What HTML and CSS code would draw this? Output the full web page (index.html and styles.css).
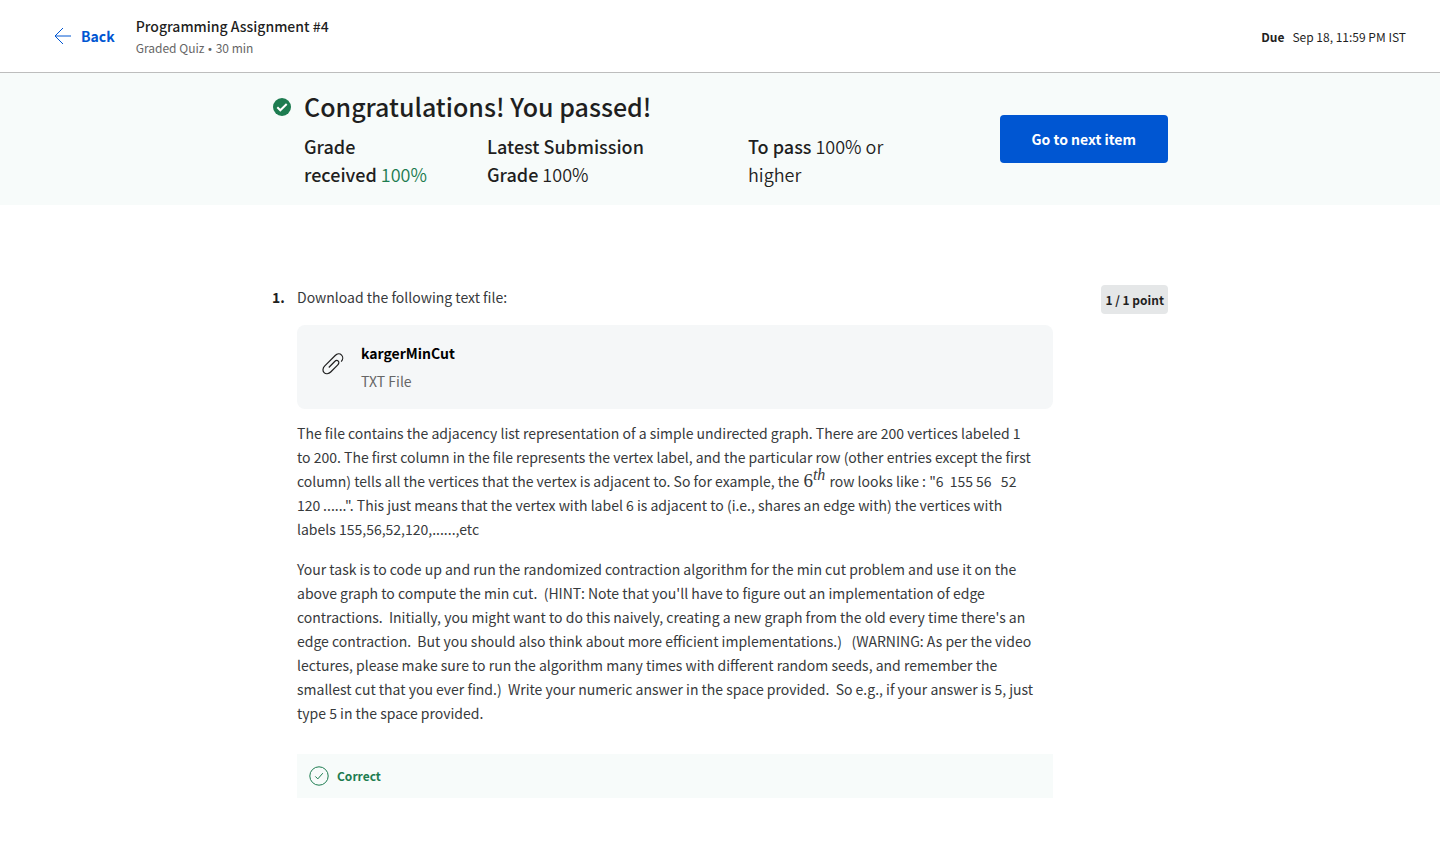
FILE: index.html
```html
<!DOCTYPE html>
<html lang="en">
<head>
<meta charset="utf-8">
<title>Programming Assignment #4</title>
<link rel="stylesheet" href="styles.css">
</head>
<body>
<header class="topbar">
  <a class="back" href="#">
    <svg class="back-icon" viewBox="0 0 18 18" aria-hidden="true"><path d="M17 9H1M9 1L1 9l8 8"/></svg>
    Back
  </a>
  <div class="heading">
    <h1 class="heading-title">Programming Assignment #4</h1>
    <p class="heading-meta">Graded Quiz <span class="dot">•</span> 30 min</p>
  </div>
  <p class="due"><strong>Due</strong><span>Sep 18, 11:59 PM IST</span></p>
</header>
<section class="banner">
  <div class="container banner-row">
    <svg class="pass-icon" viewBox="0 0 18 18" aria-hidden="true"><circle cx="9" cy="9" r="9"/><path d="M4.300 9.300l3 3L13.700 6"/></svg>
    <div class="result">
      <h2 class="result-title">Congratulations! You passed!</h2>
      <div class="grades">
        <p><strong>Grade received</strong>&nbsp;<span class="passed">100%</span></p>
        <p><strong>Latest Submission Grade</strong>&nbsp;100%</p>
        <p><strong>To pass</strong> 100% or higher</p>
      </div>
    </div>
    <button class="next" type="button">Go to next item</button>
  </div>
</section>
<main class="container question">
  <span class="number">1.</span>
  <div class="body">
    <p>Download the following text file:</p>
    <a class="file" href="#">
      <svg class="clip" viewBox="0 0 24 24" aria-hidden="true"><path d="M20.200 9.600c1.800-2 2.100-4.800.4-6.500-1.700-1.700-4.500-1.500-6.400.4L3.800 13.900c-2.200 2.200-2.400 5-.7 6.700 1.700 1.700 4.500 1.500 6.600-.6l7.100-7.200c1.200-1.200 1.400-2.700.5-3.600-1-1-2.500-.8-3.600.3l-5.900 6"/></svg>
      <span class="file-text"><strong>kargerMinCut</strong><span class="file-type">TXT File</span></span>
    </a>
    <p>The file contains the adjacency list representation of a simple undirected graph. There are 200 vertices labeled 1<br>to 200. The first column in the file represents the vertex label, and the particular row (other entries except the first<br>column) tells all the vertices that the vertex is adjacent to. So for example, the <span class="math">6<sup>th</sup></span> row looks like : "6&nbsp; 155&thinsp;56&nbsp;&nbsp; 52<br>120&thinsp;......". This just means that the vertex with label 6 is adjacent to (i.e., shares an edge with) the vertices with<br>labels 155,56,52,120,......,etc</p>
    <p>Your task is to code up and run the randomized contraction algorithm for the min cut problem and use it on the<br>above graph to compute the min cut.&nbsp; (HINT: Note that you'll have to figure out an implementation of edge<br>contractions.&nbsp; Initially, you might want to do this naively, creating a new graph from the old every time there's an<br>edge contraction.&nbsp; But you should also think about more efficient implementations.)&nbsp;&nbsp; (WARNING: As per the video<br>lectures, please make sure to run the algorithm many times with different random seeds, and remember the<br>smallest cut that you ever find.)&nbsp; Write your numeric answer in the space provided.&nbsp; So e.g., if your answer is 5, just<br>type 5 in the space provided.</p>
    <div class="feedback">
      <svg class="ok-icon" viewBox="0 0 20 20" aria-hidden="true"><circle cx="10" cy="10" r="9.200"/><path d="M6.300 10.400l2.500 2.500 5-5.700"/></svg>
      Correct
    </div>
  </div>
  <span class="points">1 / 1 point</span>
</main>
</body>
</html>
```

FILE: styles.css
```css
* { box-sizing: border-box; }
body {
  margin: 0;
  background: #fff;
  color: #1f1f1f;
  font-family: "Noto Sans CJK SC", "Noto Sans", sans-serif;
  font-size: 14px;
  font-weight: 400;
  line-height: 24px;
}
h1, h2, p { margin: 0; }
a { color: inherit; text-decoration: none; }
svg { flex: none; fill: none; }
strong { font-weight: 500; }
.container { max-width: 896px; margin: 0 auto; }

.topbar {
  display: flex;
  align-items: center;
  min-height: 73px;
  padding: 0 34px 0 54px;
  border-bottom: 1px solid #bdbdbd;
}
.back {
  display: flex;
  align-items: center;
  gap: 9px;
  margin-right: 21px;
  color: #0056d2;
  font-weight: 700;
}
.back-icon { width: 18px; height: 18px; stroke: #0056d2; }
.heading-title { font-size: 14px; font-weight: 500; line-height: 24px; }
.heading-meta { color: #666; font-size: 12px; line-height: 20px; }
.dot { font-family: "DejaVu Sans", sans-serif; font-size: 10px; line-height: 1; }
.due { display: flex; gap: 8px; margin-left: auto; padding-top: 2px; font-size: 12px; }
.due strong { font-weight: 700; }

.banner { background: #f7fbfa; }
.banner-row { display: flex; padding: 16px 0; }
.pass-icon { width: 18px; height: 18px; margin: 9px 13px 0 1px; }
.pass-icon circle { fill: #1d7c50; }
.pass-icon path { stroke: #fff; stroke-width: 2; }
.result { flex: 1; }
.result-title { font-size: 25px; font-weight: 500; line-height: 34px; }
.grades {
  display: grid;
  grid-template-columns: 147px 225px 150px;
  column-gap: 36px;
  margin: 9px 0 1px;
  font-size: 18px;
  font-weight: 350;
  line-height: 28px;
}
.passed { color: #1d7c50; }
.next {
  align-self: center;
  height: 48px;
  padding: 0 32px;
  border: 0;
  border-radius: 4px;
  background: #0056d2;
  color: #fff;
  font: inherit;
  font-weight: 700;
}

.question {
  display: grid;
  grid-template-columns: 25px minmax(0, 756px) 1fr;
  align-items: start;
  padding: 80px 0 64px;
}
.number { font-weight: 700; }
.body { display: grid; gap: 16px; color: #373a3c; }
.file {
  display: flex;
  align-items: flex-start;
  gap: 16px;
  margin-bottom: -4px;
  padding: 14px 24px;
  border-radius: 8px;
  background: #f5f7f8;
  line-height: 28px;
}
.clip { width: 24px; height: 24px; margin-top: 13px; stroke: #1f1f1f; stroke-width: 1.2; }
.file-text { display: grid; }
.file-text strong { color: #000; font-weight: 700; }
.file-type { color: #666; }
.math { padding: 0 1px; font-family: "Liberation Serif", serif; font-size: 19px; line-height: 1; }
.math sup { font-size: 16px; font-style: italic; line-height: 0; }
.feedback {
  display: flex;
  align-items: center;
  gap: 8px;
  min-height: 44px;
  margin-top: 13px;
  padding: 0 12px;
  background: #f7fbfa;
  color: #1d7c50;
  font-size: 12px;
  font-weight: 700;
}
.ok-icon { width: 20px; height: 20px; stroke: #1d7c50; }
.points {
  justify-self: end;
  padding: 3px 4px 2px;
  border-radius: 4px;
  background: #e5e7e8;
  font-size: 12px;
  font-weight: 700;
}
```
